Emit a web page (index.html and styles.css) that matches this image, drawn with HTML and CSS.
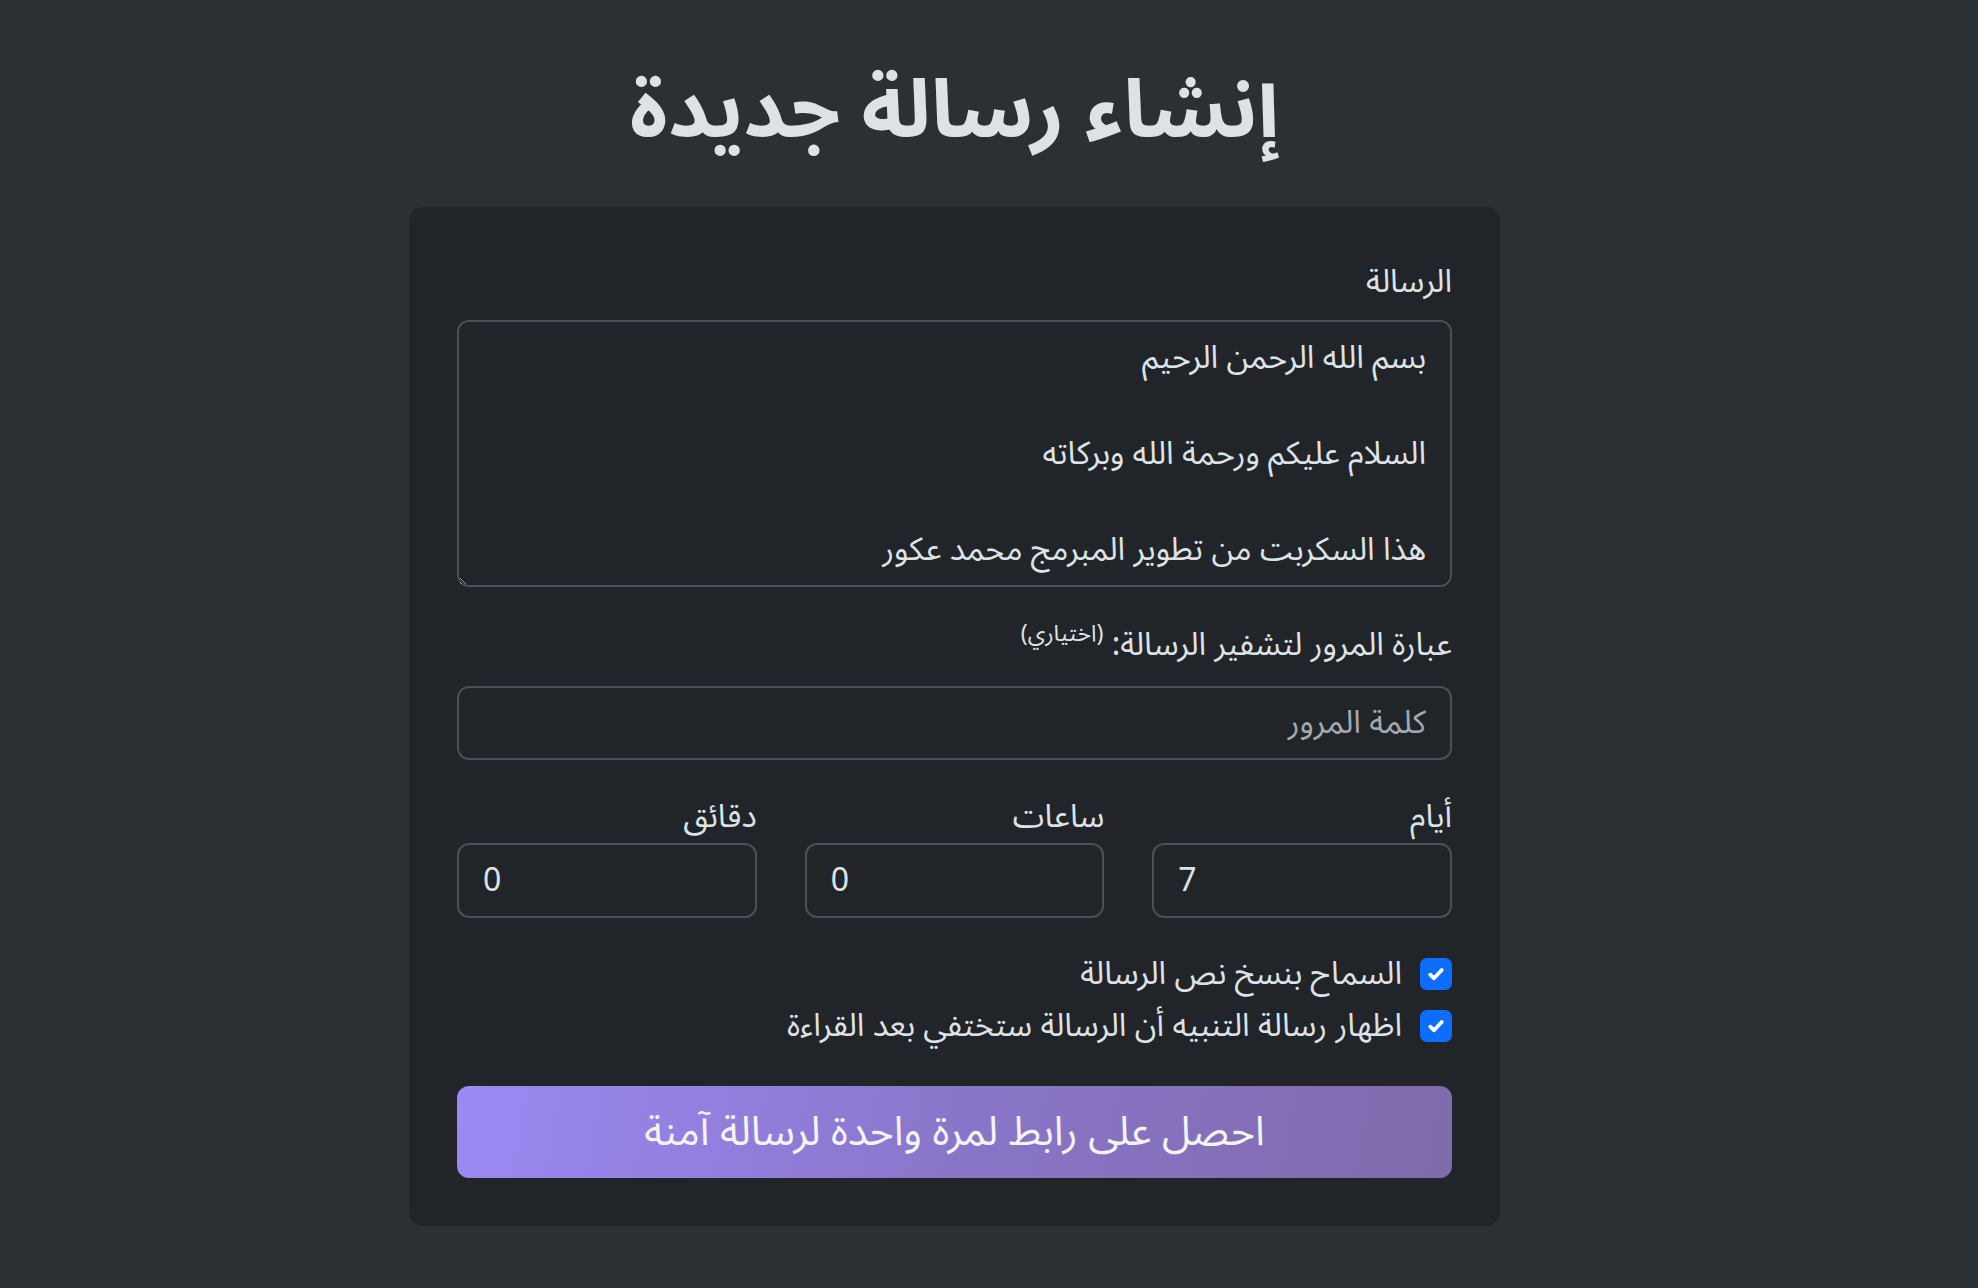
FILE: index.html
```html
<!DOCTYPE html>
<html lang="ar" dir="rtl">
<head>
<meta charset="utf-8">
<title>إنشاء رسالة جديدة</title>
<link rel="stylesheet" href="styles.css">
</head>
<body>
<main class="page">
  <h1 class="title">إنشاء رسالة جديدة</h1>
  <form class="card">
    <div class="group">
      <label class="field-label" for="msg">الرسالة</label>
      <textarea id="msg" class="control textarea" rows="5">بسم الله الرحمن الرحيم

السلام عليكم ورحمة الله وبركاته

هذا السكربت من تطوير المبرمج محمد عكور</textarea>
    </div>
    <div class="group group-pass">
      <label class="field-label label-pass" for="pass">عبارة المرور لتشفير الرسالة: <sup class="optional">(اختياري)</sup></label>
      <input id="pass" class="control input" type="text" placeholder="كلمة المرور">
    </div>
    <div class="expiry">
      <div class="expiry-item">
        <label class="small-label" for="days">أيام</label>
        <input id="days" class="control input num" type="text" value="7">
      </div>
      <div class="expiry-item">
        <label class="small-label" for="hours">ساعات</label>
        <input id="hours" class="control input num" type="text" value="0">
      </div>
      <div class="expiry-item">
        <label class="small-label" for="mins">دقائق</label>
        <input id="mins" class="control input num" type="text" value="0">
      </div>
    </div>
    <div class="checks">
      <label class="check">
        <span class="box"><svg viewBox="0 0 20 20" width="22" height="22"><path d="M4.8 10.6l3.4 3.3 7-7.6" fill="none" stroke="#fff" stroke-width="3.4" stroke-linecap="round" stroke-linejoin="round"/></svg></span>
        <span class="check-text">السماح بنسخ نص الرسالة</span>
      </label>
      <label class="check">
        <span class="box"><svg viewBox="0 0 20 20" width="22" height="22"><path d="M4.8 10.6l3.4 3.3 7-7.6" fill="none" stroke="#fff" stroke-width="3.4" stroke-linecap="round" stroke-linejoin="round"/></svg></span>
        <span class="check-text">اظهار رسالة التنبيه أن الرسالة ستختفي بعد القراءة</span>
      </label>
    </div>
    <button type="button" class="submit">احصل على رابط لمرة واحدة لرسالة آمنة</button>
  </form>
</main>
</body>
</html>
```
FILE: styles.css
```css
html {
  color-scheme: dark;
}
body {
  margin: 0;
  background: #2b3035;
  color: #dee2e6;
  font-family: "Noto Sans Arabic", "DejaVu Sans", sans-serif;
}
.page {
  width: 1091px;
  margin: 0 478px 0 auto;
  padding-bottom: 60px;
}
.title {
  margin: 0;
  padding-top: 62px;
  height: 207px;
  box-sizing: border-box;
  text-align: center;
  font-size: 81px;
  line-height: 100px;
  font-weight: 700;
  color: #dee2e6;
}
.card {
  background: #212529;
  border-radius: 14px;
  padding: 48px;
  display: flex;
  flex-direction: column;
}
.field-label {
  display: block;
  font-size: 32px;
  line-height: 54px;
  height: 54px;
  margin-bottom: 11px;
}
.control {
  display: block;
  width: 100%;
  box-sizing: border-box;
  background: #212529;
  color: #dee2e6;
  border: 2px solid #495057;
  border-radius: 12px;
  font-family: inherit;
  font-size: 32px;
  outline: none;
}
.textarea {
  height: 267px;
  padding: 12px 24px;
  line-height: 48px;
  resize: vertical;
}
.group-pass {
  margin-top: 31px;
}
.label-pass {
  margin-bottom: 14px;
}
.optional {
  font-size: 23px;
  vertical-align: 14px;
  line-height: 0;
}
.input {
  height: 74px;
  padding: 0 24px;
}
.input::placeholder {
  color: #a3a9af;
}
.expiry {
  margin-top: 31px;
  display: grid;
  grid-template-columns: repeat(3, 1fr);
  column-gap: 48px;
}
.small-label {
  display: block;
  font-size: 32px;
  line-height: 52px;
  height: 52px;
  margin-bottom: 0;
}
.num {
  height: 75px;
  direction: ltr;
  text-align: left;
}
.checks {
  margin-top: 40px;
  display: flex;
  flex-direction: column;
  gap: 20px;
}
.check {
  display: flex;
  align-items: center;
  gap: 18px;
  height: 32px;
  font-size: 32px;
}
.check-text {
  line-height: 32px;
}
.box {
  width: 32px;
  height: 32px;
  flex: none;
  border-radius: 7px;
  background: #0d6efd;
  display: flex;
  align-items: center;
  justify-content: center;
}
.submit {
  margin-top: 44px;
  height: 92px;
  border: none;
  border-radius: 12px;
  background: linear-gradient(100deg, #9c89f4 0%, #8a76c9 50%, #7f6aab 100%);
  color: #f3f3f3;
  font-family: inherit;
  font-size: 41px;
  cursor: pointer;
}
```
